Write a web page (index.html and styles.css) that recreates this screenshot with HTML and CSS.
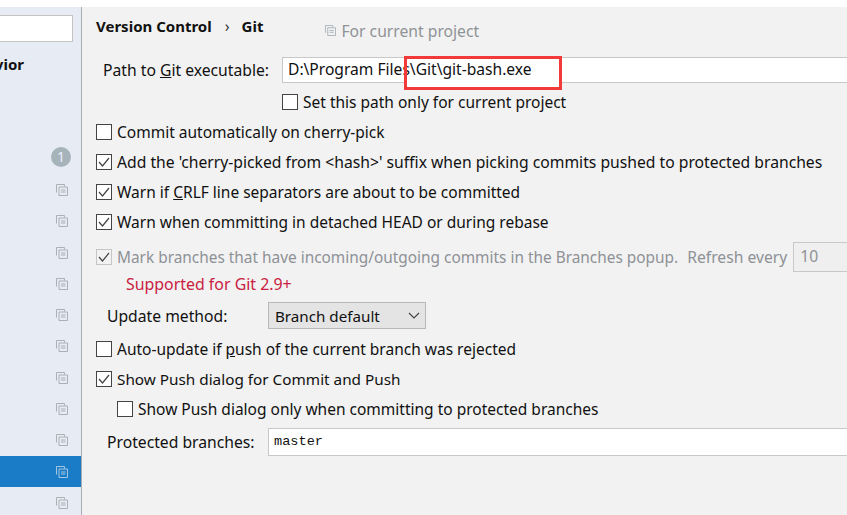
FILE: index.html
```html
<!DOCTYPE html>
<html lang="en">

<head>
    <meta charset="UTF-8">
    <title>Settings - Git</title>
    <link rel="stylesheet" href="styles.css">
</head>

<body>
    <svg class="icon-defs" width="0" height="0">
        <symbol id="copy" viewBox="0 0 12 12">
            <path d="M.5 8.500v-8h8v2" fill="none" stroke="currentColor"/>
            <path d="M3 3h8.500v8.500H3z" fill="none" stroke="currentColor"/>
            <path d="M5 6h4.500M5 8h4.500" stroke="currentColor"/>
        </symbol>
    </svg>

    <div class="top-strip"></div>

    <div class="window">
        <aside class="sidebar">
            <div class="search"></div>
            <div class="group-title">Appearance &amp; Behavior</div>
            <div class="tree">
                <div class="tree-row"><span class="badge">1</span></div>
                <div class="tree-row"><svg class="copy-icon"><use href="#copy"/></svg></div>
                <div class="tree-row"><svg class="copy-icon"><use href="#copy"/></svg></div>
                <div class="tree-row"><svg class="copy-icon"><use href="#copy"/></svg></div>
                <div class="tree-row"><svg class="copy-icon"><use href="#copy"/></svg></div>
                <div class="tree-row"><svg class="copy-icon"><use href="#copy"/></svg></div>
                <div class="tree-row"><svg class="copy-icon"><use href="#copy"/></svg></div>
                <div class="tree-row"><svg class="copy-icon"><use href="#copy"/></svg></div>
                <div class="tree-row"><svg class="copy-icon"><use href="#copy"/></svg></div>
                <div class="tree-row"><svg class="copy-icon"><use href="#copy"/></svg></div>
                <div class="tree-row selected"><svg class="copy-icon"><use href="#copy"/></svg></div>
                <div class="tree-row"><svg class="copy-icon"><use href="#copy"/></svg></div>
            </div>
        </aside>

        <main class="panel">
            <div class="breadcrumb">
                <b>Version Control</b>
                <span class="crumb-sep">&#8250;</span>
                <b>Git</b>
                <span class="scope"><svg class="copy-icon"><use href="#copy"/></svg>For current project</span>
            </div>

            <div class="path-row">
                <label class="path-label">Path to <u>G</u>it executable:</label>
                <div class="text-field path-field">D:\Program Files\Git\git-bash.exe</div>
                <div class="red-box"></div>
            </div>

            <label class="check check-project"><span class="box"></span>Set this path only for current project</label>
            <label class="check first"><span class="box"></span>Commit automatically on cherry-pick</label>
            <label class="check wide"><span class="box on"></span>Add the 'cherry-picked from &lt;hash&gt;' suffix when picking commits pushed to protected branches</label>
            <label class="check"><span class="box on"></span>Warn if <u>C</u>RLF line separators are about to be committed</label>
            <label class="check"><span class="box on"></span>Warn when committing in detached HEAD or during rebase</label>

            <div class="check mark-row disabled">
                <span class="box on"></span>
                <span class="mark-text">Mark branches that have incoming/outgoing commits in the Branches popup.</span>
                <span class="refresh">Refresh every</span>
                <div class="refresh-field">10</div>
            </div>
            <div class="supported">Supported for Git 2.9+</div>

            <div class="update-row">
                <span class="update-label">Update method:</span>
                <div class="select">Branch default
                    <svg class="chevron" width="12" height="7" viewBox="0 0 12 7"><path d="M1 1l5 5 5-5" fill="none" stroke="#444" stroke-width="1.200"/></svg>
                </div>
            </div>

            <label class="check"><span class="box"></span>Auto-update if <u>p</u>ush of the current branch was rejected</label>
            <label class="check narrow"><span class="box on"></span>Show Push dialog for Commit and Push</label>
            <label class="check nested"><span class="box"></span>Show Push dialog only when committing to protected branches</label>

            <div class="protected-row">
                <span class="update-label">Protected branches:</span>
                <div class="text-field protected-field">master</div>
            </div>
        </main>
    </div>
</body>

</html>
```

FILE: styles.css
```css
body {
    margin: 0;
    height: 515px;
    overflow: hidden;
    background-color: #fff;
    font-family: "Noto Sans", sans-serif;
    font-size: 15.700px;
    color: #111;
}

.icon-defs {
    position: absolute;
}

.top-strip {
    height: 7px;
    background-color: #fff;
}

.window {
    display: flex;
    height: 508px;
    background-color: #f2f2f2;
}

/* Barra lateral */
.sidebar {
    flex: none;
    width: 81px;
    border-right: 1px solid #a9adb3;
    background-color: #e6ebf4;
    overflow: hidden;
}

.search {
    box-sizing: border-box;
    width: 73px;
    height: 27px;
    margin-top: 8px;
    background-color: #fff;
    border: 1px solid #c4c4c4;
    border-left: none;
}

.group-title {
    display: flex;
    justify-content: flex-end;
    height: 20px;
    margin-top: 12px;
    margin-right: 57px;
    font-size: 15px;
    font-weight: bold;
    line-height: 20px;
    white-space: nowrap;
}

.tree {
    margin-top: 1px;
    padding-top: 68px;
}

.tree-row {
    display: flex;
    align-items: center;
    justify-content: flex-end;
    height: 31.300px;
    padding-right: 13px;
}

.tree-row:first-child {
    padding-right: 10px;
}

.tree-row.selected {
    background-color: #1a7cc6;
}

.copy-icon {
    width: 12px;
    height: 12px;
    color: #a9b0b6;
}

.selected .copy-icon {
    color: #a5c6e2;
}

.badge {
    width: 20px;
    height: 20px;
    margin-top: -4px;
    border-radius: 50%;
    background-color: #a7b3ba;
    color: #eef;
    font-size: 14px;
    line-height: 20px;
    text-align: center;
}

/* Panel derecho */
.panel {
    flex: 1;
    min-width: 0;
    padding-left: 14px;
    overflow: hidden;
}

.breadcrumb {
    display: flex;
    align-items: center;
    height: 24px;
    margin-top: 7px;
    white-space: nowrap;
}

.breadcrumb b {
    font-size: 15px;
    font-weight: bold;
}

.crumb-sep {
    margin: 0 12px 0 13px;
    color: #333;
}

.scope {
    display: flex;
    align-items: center;
    margin-left: 62px;
    margin-top: 9px;
    color: #8f9296;
}

.scope .copy-icon {
    width: 11px;
    height: 11px;
    margin-right: 5px;
}

.path-row {
    position: relative;
    display: flex;
    align-items: center;
    height: 26px;
    margin-top: 19px;
    margin-left: 7px;
}

.path-label {
    width: 179px;
    flex: none;
}

.text-field {
    box-sizing: border-box;
    flex: 1;
    background-color: #fff;
    border: 1px solid #c8c8c8;
    white-space: nowrap;
}

.path-field {
    height: 26px;
    padding-left: 5px;
    font-size: 15.600px;
    line-height: 23px;
    margin-right: -20px;
}

/* Rectangulo rojo encima del campo */
.red-box {
    position: absolute;
    left: 301px;
    top: -1px;
    width: 158px;
    height: 34px;
    box-sizing: border-box;
    border: 3px solid #f23a3a;
    background: linear-gradient(transparent 23px, #fff 23px);
}

.check {
    display: flex;
    align-items: center;
    height: 20px;
    margin-top: 10px;
    font-size: 15.500px;
    white-space: pre;
}

.check.wide {
    font-size: 15.700px;
}

.check.narrow {
    font-size: 15.300px;
}

.box {
    flex: none;
    box-sizing: border-box;
    width: 16px;
    height: 16px;
    margin-right: 5px;
    border: 1px solid #444;
    background-color: #fff;
    background-repeat: no-repeat;
    background-position: center;
}

.box.on {
    background-image: url("data:image/svg+xml,%3Csvg xmlns='http://www.w3.org/2000/svg' width='12' height='10'%3E%3Cpath d='M1 5l3.500 4L11 1' fill='none' stroke='%23444' stroke-width='1.200'/%3E%3C/svg%3E");
}

.check-project {
    margin-top: 9px;
    margin-left: 186px;
}

.first {
    margin-top: 10px;
}

.mark-row {
    margin-top: 15px;
}

.mark-text {
    font-size: 15.400px;
}

.disabled {
    color: #8e9196;
}

.disabled .box {
    border-color: #c6c6c6;
    background-color: #f2f2f2;
}

.refresh {
    margin-left: 9px;
    font-size: 15.700px;
}

.refresh-field {
    flex: none;
    box-sizing: border-box;
    width: 70px;
    height: 30px;
    margin-left: 6px;
    padding-left: 6px;
    border: 1px solid #c8c8c8;
    background-color: #efefef;
    font-size: 15.700px;
    line-height: 26px;
}

.supported {
    height: 20px;
    margin-top: 7px;
    margin-left: 30px;
    color: #c9213f;
    font-size: 15.900px;
    line-height: 20px;
}

.update-row {
    display: flex;
    align-items: center;
    height: 27px;
    margin-top: 8px;
    margin-left: 11px;
}

.update-label {
    flex: none;
    width: 161px;
}

.select {
    display: flex;
    align-items: center;
    justify-content: space-between;
    box-sizing: border-box;
    width: 158px;
    height: 27px;
    padding: 0 5px 0 6px;
    border: 1px solid #b8b8b8;
    background-color: #e4e4e4;
    font-size: 15.200px;
}

.chevron {
    flex: none;
}

.nested {
    margin-left: 21px;
}

.protected-row {
    display: flex;
    align-items: center;
    height: 28px;
    margin-top: 9px;
    margin-left: 11px;
}

.protected-field {
    height: 28px;
    padding-left: 5px;
    margin-right: -20px;
    font-family: "Liberation Mono", monospace;
    font-size: 13.600px;
    line-height: 25px;
}
```
